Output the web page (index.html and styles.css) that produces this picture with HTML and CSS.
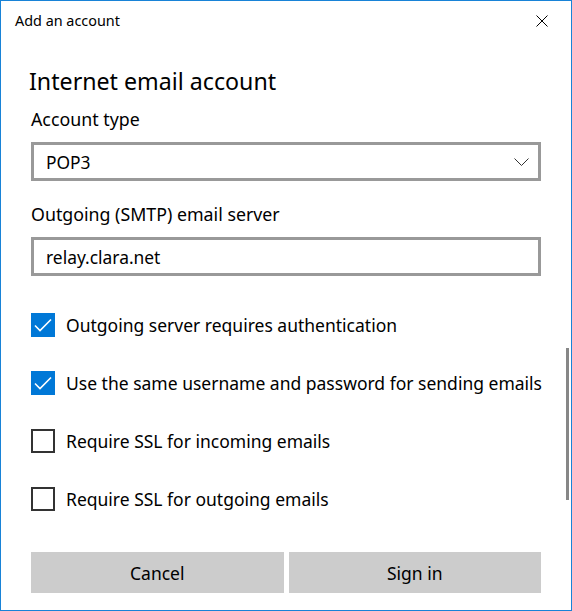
FILE: index.html
```html
<!DOCTYPE html>
<html>
<head>
<meta charset="utf-8">
<title>Add an account</title>
<link rel="stylesheet" href="styles.css">
</head>
<body>
<div class="window">
  <div class="titlebar">
    <span class="title">Add an account</span>
    <svg class="close" width="12" height="12" viewBox="0 0 12 12"><path d="M0.5 0.5 L11.5 11.5 M11.5 0.5 L0.5 11.5" stroke="#000" stroke-width="1" fill="none"/></svg>
  </div>
  <div class="content">
    <h1 class="heading">Internet email account</h1>
    <div class="label first">Account type</div>
    <div class="field select">
      <span>POP3</span>
      <svg class="chevron" width="15" height="8" viewBox="0 0 15 8"><path d="M0.5 0.5 L7.5 7.5 L14.5 0.5" stroke="#333" stroke-width="1" fill="none"/></svg>
    </div>
    <div class="label second">Outgoing (SMTP) email server</div>
    <div class="field input"><span>relay.clara.net</span></div>
    <div class="checks">
      <div class="check-row">
        <span class="box checked"><svg width="24" height="24" viewBox="0 0 24 24"><path d="M4 12.5 L9 17.5 L20 6.5" stroke="#fff" stroke-width="1.6" fill="none"/></svg></span>
        <span class="check-text">Outgoing server requires authentication</span>
      </div>
      <div class="check-row">
        <span class="box checked"><svg width="24" height="24" viewBox="0 0 24 24"><path d="M4 12.5 L9 17.5 L20 6.5" stroke="#fff" stroke-width="1.6" fill="none"/></svg></span>
        <span class="check-text">Use the same username and password for sending emails</span>
      </div>
      <div class="check-row">
        <span class="box"></span>
        <span class="check-text">Require SSL for incoming emails</span>
      </div>
      <div class="check-row">
        <span class="box"></span>
        <span class="check-text">Require SSL for outgoing emails</span>
      </div>
    </div>
    <div class="buttons">
      <div class="btn">Cancel</div>
      <div class="btn">Sign in</div>
    </div>
  </div>
  <div class="scroll-thumb"></div>
</div>
</body>
</html>
```
FILE: styles.css
```css
html, body {
  margin: 0;
  padding: 0;
  background: #fff;
}
.window {
  position: relative;
  width: 572px;
  height: 611px;
  box-sizing: border-box;
  border: 1px solid #1883d7;
  background: #fff;
  font-family: "Noto Sans", "Open Sans", sans-serif;
  color: #000;
  overflow: hidden;
}
.titlebar {
  height: 39px;
  display: flex;
  align-items: center;
  justify-content: space-between;
  padding: 0 23px 0 14px;
}
.title {
  font-size: 14.4px;
  line-height: 18px;
}
.close {
  display: block;
}
.content {
  padding: 0 30px;
}
.heading {
  margin: 26px 0 0 -2px;
  font-size: 23.2px;
  font-weight: 400;
  line-height: 30px;
}
.label {
  font-size: 17.8px;
  line-height: 24px;
}
.label.first {
  margin-top: 11px;
}
.label.second {
  margin-top: 21px;
}
.field {
  box-sizing: border-box;
  height: 39px;
  border: 3px solid #999;
  display: flex;
  align-items: center;
  justify-content: space-between;
  padding: 0 9px 0 12px;
  font-size: 17.4px;
}
.select {
  margin-top: 11px;
}
.input {
  margin-top: 11px;
}
.chevron {
  display: block;
}
.checks {
  margin-top: 37px;
  display: flex;
  flex-direction: column;
  gap: 34px;
}
.check-row {
  display: flex;
  align-items: center;
  height: 24px;
}
.box {
  box-sizing: border-box;
  width: 24px;
  height: 24px;
  border: 2px solid #333;
  flex: none;
  margin-right: 11px;
}
.box.checked {
  border: none;
  background: #0078d7;
}
.box svg {
  display: block;
}
.check-text {
  font-size: 17.5px;
  line-height: 24px;
  white-space: nowrap;
}
.buttons {
  margin-top: 41px;
  display: grid;
  grid-template-columns: 1fr 1fr;
  gap: 5px;
}
.btn {
  height: 41px;
  background: #cccccc;
  display: flex;
  align-items: center;
  justify-content: center;
  font-size: 17.5px;
}
.scroll-thumb {
  position: absolute;
  left: 565px;
  top: 347px;
  width: 3px;
  height: 152px;
  background: #878787;
}
```
